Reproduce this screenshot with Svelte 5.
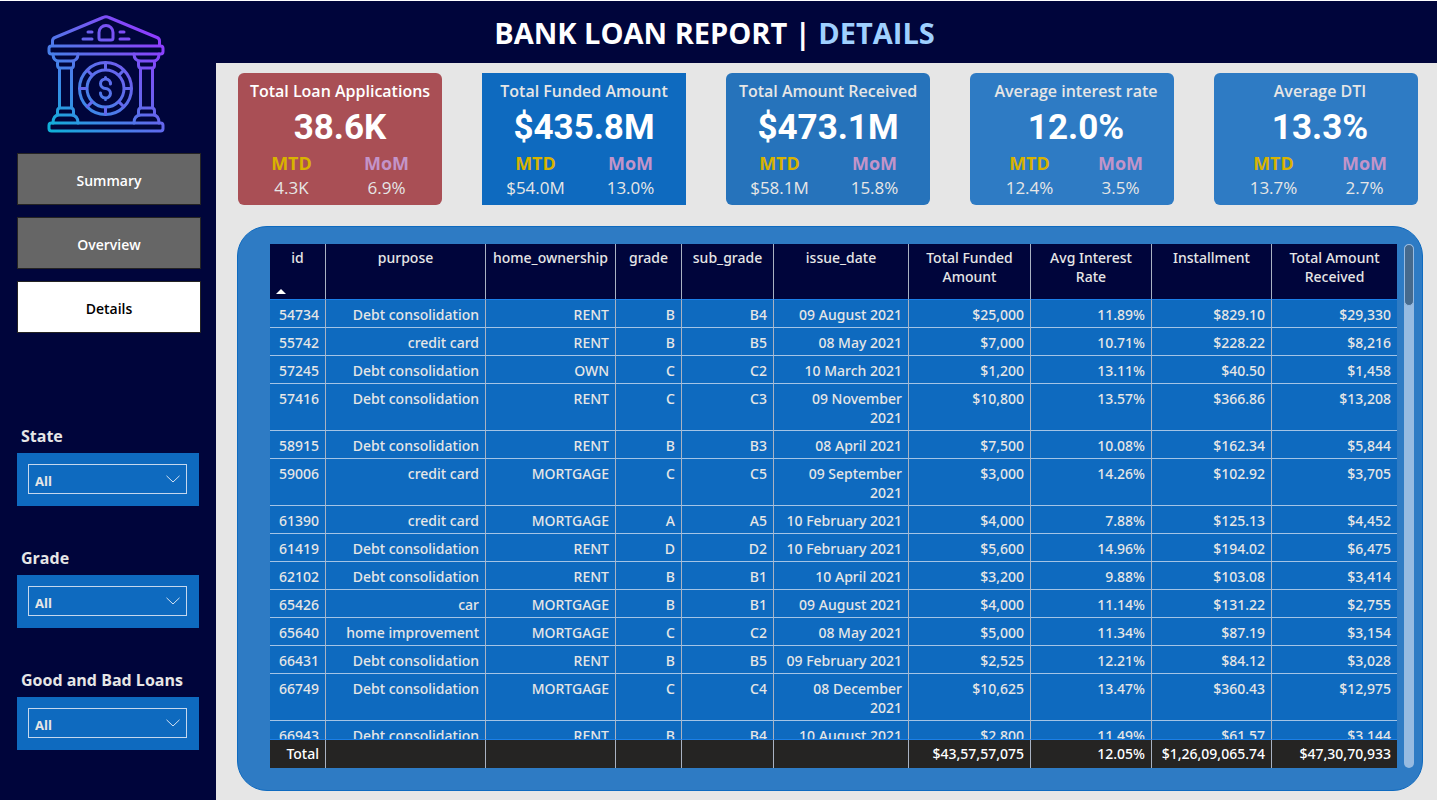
<script>
  const pages = ['Summary', 'Overview', 'Details'];
  const current = 'Details';

  const filters = [
    { id: 'state', label: 'State' },
    { id: 'grade', label: 'Grade' },
    { id: 'quality', label: 'Good and Bad Loans' }
  ];

  const cards = [
    { title: 'Total Loan Applications', value: '38.6K', mtd: '4.3K', mom: '6.9%', tone: 'red' },
    { title: 'Total Funded Amount', value: '$435.8M', mtd: '$54.0M', mom: '13.0%', tone: 'solid' },
    { title: 'Total Amount Received', value: '$473.1M', mtd: '$58.1M', mom: '15.8%', tone: 'mid' },
    { title: 'Average interest rate', value: '12.0%', mtd: '12.4%', mom: '3.5%', tone: 'light' },
    { title: 'Average DTI', value: '13.3%', mtd: '13.7%', mom: '2.7%', tone: 'light' }
  ];

  const columns = [
    { name: 'id', width: 56 },
    { name: 'purpose', width: 160 },
    { name: 'home_ownership', width: 130 },
    { name: 'grade', width: 66 },
    { name: 'sub_grade', width: 92 },
    { name: 'issue_date', width: 135 },
    { name: 'Total Funded Amount', width: 122 },
    { name: 'Avg Interest Rate', width: 121 },
    { name: 'Installment', width: 120 },
    { name: 'Total Amount Received', width: 125 }
  ];
  const total = columns.reduce((sum, c) => sum + c.width, 0);

  const rows = [
    ['54734', 'Debt consolidation', 'RENT', 'B', 'B4', '09 August 2021', '$25,000', '11.89%', '$829.10', '$29,330'],
    ['55742', 'credit card', 'RENT', 'B', 'B5', '08 May 2021', '$7,000', '10.71%', '$228.22', '$8,216'],
    ['57245', 'Debt consolidation', 'OWN', 'C', 'C2', '10 March 2021', '$1,200', '13.11%', '$40.50', '$1,458'],
    ['57416', 'Debt consolidation', 'RENT', 'C', 'C3', '09 November 2021', '$10,800', '13.57%', '$366.86', '$13,208'],
    ['58915', 'Debt consolidation', 'RENT', 'B', 'B3', '08 April 2021', '$7,500', '10.08%', '$162.34', '$5,844'],
    ['59006', 'credit card', 'MORTGAGE', 'C', 'C5', '09 September 2021', '$3,000', '14.26%', '$102.92', '$3,705'],
    ['61390', 'credit card', 'MORTGAGE', 'A', 'A5', '10 February 2021', '$4,000', '7.88%', '$125.13', '$4,452'],
    ['61419', 'Debt consolidation', 'RENT', 'D', 'D2', '10 February 2021', '$5,600', '14.96%', '$194.02', '$6,475'],
    ['62102', 'Debt consolidation', 'RENT', 'B', 'B1', '10 April 2021', '$3,200', '9.88%', '$103.08', '$3,414'],
    ['65426', 'car', 'MORTGAGE', 'B', 'B1', '09 August 2021', '$4,000', '11.14%', '$131.22', '$2,755'],
    ['65640', 'home improvement', 'MORTGAGE', 'C', 'C2', '08 May 2021', '$5,000', '11.34%', '$87.19', '$3,154'],
    ['66431', 'Debt consolidation', 'RENT', 'B', 'B5', '09 February 2021', '$2,525', '12.21%', '$84.12', '$3,028'],
    ['66749', 'Debt consolidation', 'MORTGAGE', 'C', 'C4', '08 December 2021', '$10,625', '13.47%', '$360.43', '$12,975'],
    ['66943', 'Debt consolidation', 'RENT', 'B', 'B4', '10 August 2021', '$2,800', '11.49%', '$61.57', '$3,144']
  ];

  const totals = ['Total', '', '', '', '', '', '$43,57,57,075', '12.05%', '$1,26,09,065.74', '$47,30,70,933'];
  const spokes = [0, 45, 90, 135, 180, 225, 270, 315];
</script>

<div class="page">
  <aside class="sidebar">
    <svg class="logo" viewBox="0 0 118 118" fill="none" stroke="url(#bank)" stroke-width="3" stroke-linejoin="round" stroke-linecap="round" aria-hidden="true">
      <defs>
        <linearGradient id="bank" gradientUnits="userSpaceOnUse" x1="4" y1="114" x2="106" y2="18">
          <stop offset="0" stop-color="#10b0d8" />
          <stop offset="0.3" stop-color="#3f86e8" />
          <stop offset="0.65" stop-color="#6a61ee" />
          <stop offset="1" stop-color="#8f3cff" />
        </linearGradient>
      </defs>
      <path d="M5.500 30V26Q5.500 23.500 8 22.500L56 2.500Q59 1 62 2.500L110 22.500Q112.500 23.500 112.500 26V30" />
      <rect x="2" y="31" width="114" height="8" rx="2.500" />
      <rect x="2" y="108" width="114" height="8" rx="2.500" />
      <path d="M52 23V17.500A7 7 0 0 1 66 17.500V23Q66 25 64 25H54Q52 25 52 23Z" />
      <path d="M41 17H45M36 24H45M73 17H77M73 24H82" />
      <path d="M6 39Q6 46 12 46H24Q31 46 31 39M10.500 46V50Q10.500 53 13 53H24Q26.500 53 26.500 50V46M12.500 53V93M24.500 53V93M10.500 100V96Q10.500 93 13 93H24Q26.500 93 26.500 96V100M6 108Q6 100 12 100H24Q31 100 31 108" />
      <path d="M87 39Q87 46 94 46H106Q112 46 112 39M91.500 46V50Q91.500 53 94 53H105Q107.500 53 107.500 50V46M93.500 53V93M105.500 53V93M91.500 100V96Q91.500 93 94 93H105Q107.500 93 107.500 96V100M87 108Q87 100 94 100H106Q112 100 112 108" />
      <circle cx="58.500" cy="73.500" r="26" />
      <circle cx="58.500" cy="73.500" r="18.500" />
      {#each spokes as angle}
        <path d="M58.500 48V54.500" transform="rotate({angle} 58.500 73.500)" />
      {/each}
      <path d="M63.500 69A5 4.800 0 1 0 58.500 73.500A5 4.800 0 1 1 53.500 78M58.500 62.500V64M58.500 83V84.500" />
    </svg>

    <nav>
      {#each pages as page}
        <button type="button" class:active={page === current}>{page}</button>
      {/each}
    </nav>

    <div class="filters">
      {#each filters as filter}
        <div class="filter">
          <label for={filter.id}>{filter.label}</label>
          <div class="slicer">
            <select id={filter.id}>
              <option>All</option>
            </select>
            <svg viewBox="0 0 14 8" fill="none" stroke="#d5e3f2" aria-hidden="true"><path d="M0.500 0.800L7 7L13.500 0.800" /></svg>
          </div>
        </div>
      {/each}
    </div>
  </aside>

  <header>
    <h1>BANK LOAN REPORT | <span>DETAILS</span></h1>
  </header>

  <main>
    <section class="cards">
      {#each cards as card}
        <article class="card {card.tone}">
          <h2>{card.title}</h2>
          <strong>{card.value}</strong>
          <dl>
            <div><dt class="mtd">MTD</dt><dd>{card.mtd}</dd></div>
            <div><dt class="mom">MoM</dt><dd>{card.mom}</dd></div>
          </dl>
        </article>
      {/each}
    </section>

    <section class="panel">
      <div class="scroller">
        <table>
          <colgroup>
            {#each columns as column}
              <col style="width: {(column.width / total) * 100}%" />
            {/each}
          </colgroup>
          <thead>
            <tr>
              {#each columns as column, i}
                <th scope="col">
                  {column.name}
                  {#if i === 0}<svg class="sort" viewBox="0 0 10 5" aria-hidden="true"><path d="M0 5L5 0L10 5Z" fill="#fff" /></svg>{/if}
                </th>
              {/each}
            </tr>
          </thead>
          <tbody>
            {#each rows as row}
              <tr>
                {#each row as cell}<td>{cell}</td>{/each}
              </tr>
            {/each}
          </tbody>
          <tfoot>
            <tr>
              {#each totals as cell}<td>{cell}</td>{/each}
            </tr>
          </tfoot>
        </table>
      </div>
      <div class="track"><div class="thumb"></div></div>
    </section>
  </main>
</div>

<style>
  :global(body) {
    margin: 0;
  }

  .page {
    box-sizing: border-box;
    display: grid;
    grid-template-columns: 216px minmax(0, 1fr);
    grid-template-rows: 62px minmax(0, 1fr);
    min-height: 100vh;
    border-top: 1px solid #fff;
    background: #e6e6e6;
    color: #e6e6e6;
    font-family: 'Noto Sans', 'Open Sans', sans-serif;
    font-size: 14px;
    font-weight: 500;
    line-height: 19px;
  }

  .sidebar {
    grid-row: 1 / 3;
    background: #00053b;
    padding: 14px 15px 0 17px;
  }

  .logo {
    display: block;
    width: 118px;
    height: 118px;
    margin: 0 0 20px 30px;
  }

  nav {
    display: grid;
    gap: 12px;
  }

  button {
    height: 52px;
    border: 1px solid #252423;
    padding: 3px 0 0;
    background: #666;
    color: #fff;
    font: 600 14px/19px 'Open Sans', 'Noto Sans', sans-serif;
  }

  button.active {
    background: #fff;
    color: #000;
  }

  .filters {
    display: grid;
    gap: 42px;
    margin: 93px 2px 0 0;
  }

  label {
    display: block;
    padding: 0 0 7px 4px;
    color: #e6e6e6;
    font: 700 16px/20px 'Open Sans', 'Noto Sans', sans-serif;
    white-space: nowrap;
  }

  .slicer {
    display: grid;
    align-items: center;
    background: #0e6abf;
    padding: 11px 12px 12px 11px;
  }

  .slicer > * {
    grid-area: 1 / 1;
  }

  .slicer svg {
    width: 14px;
    height: 8px;
    justify-self: end;
    margin-right: 7px;
    pointer-events: none;
  }

  select {
    appearance: none;
    width: 100%;
    height: 30px;
    border: 1px solid #c5d8ee;
    border-radius: 0;
    background: transparent;
    color: #e6e6e6;
    padding: 4px 24px 0 6px;
    font: 700 13px/19px 'Open Sans', 'Noto Sans', sans-serif;
  }

  header {
    background: #00053b;
    padding: 2px 224px 0 0;
    display: grid;
    place-items: center;
  }

  h1 {
    margin: 0;
    color: #fff;
    font: 700 29px/40px 'Open Sans', 'Noto Sans', sans-serif;
    white-space: nowrap;
  }

  h1 span {
    color: #9fd0ff;
  }

  main {
    display: flex;
    flex-direction: column;
    padding: 10px 14px 9px 21px;
    gap: 21px;
  }

  .cards {
    display: grid;
    grid-template-columns: repeat(5, minmax(0, 1fr));
    gap: 40px;
    margin: 0 5px 0 1px;
  }

  .card {
    border-radius: 6px;
    padding: 7px 0 6px;
    text-align: center;
  }

  .red {
    background: #a94f55;
  }

  .solid {
    background: #0e6abf;
    border-radius: 0;
  }

  .mid {
    background: #2673bb;
  }

  .light {
    background: #2e7bc4;
    padding-left: 8px;
  }

  h2 {
    margin: 0;
    font: 600 16px/22px 'Open Sans', 'Noto Sans', sans-serif;
    white-space: nowrap;
  }

  .red h2 {
    color: #fff;
  }

  strong {
    display: block;
    color: #fff;
    font: 700 35px/52px Roboto, sans-serif;
  }

  dl {
    display: grid;
    grid-template-columns: 1fr 1fr;
    margin: 0 8px 0 6px;
  }

  dt {
    font: 700 18px/18px 'Open Sans', 'Noto Sans', sans-serif;
  }

  .mtd {
    color: #d9b300;
  }

  .mom {
    color: #c394c9;
  }

  dd {
    margin: 0;
    padding-top: 5px;
    font: 500 17px/22px 'Open Sans', 'Noto Sans', sans-serif;
  }

  .panel {
    flex: 1 1 0;
    min-height: 300px;
    box-sizing: border-box;
    display: flex;
    gap: 7px;
    background: #2e7bc4;
    border: 1px solid #0e6abf;
    border-radius: 30px;
    padding: 17px 8px 22px 32px;
  }

  .scroller {
    flex: 1;
    height: 0;
    min-height: 100%;
    overflow: auto;
    scrollbar-width: none;
  }

  table {
    width: 100%;
    table-layout: fixed;
    border-collapse: separate;
    border-spacing: 0;
    background: #0e6abf;
  }

  th {
    position: sticky;
    top: 0;
    height: 56px;
    box-sizing: border-box;
    padding: 4px 5px;
    border-bottom: 1px solid #1a7fe8;
    background: #00053b;
    font-weight: 500;
    vertical-align: top;
  }

  td {
    padding: 5px 6px 3px;
    border-bottom: 1px solid #a4c4e6;
    text-align: right;
    vertical-align: top;
  }

  th:not(:last-child),
  td:not(:last-child) {
    border-right: 1px solid #a9b2c2;
  }

  .sort {
    position: absolute;
    left: 6px;
    bottom: 5px;
    width: 10px;
    height: 5px;
  }

  tfoot td {
    position: sticky;
    bottom: 0;
    height: 20px;
    padding: 4px 6px;
    border-top: 1px solid #1a7fe8;
    border-bottom: 0;
    background: #252423;
    color: #fff;
  }

  .track {
    width: 10px;
    border-radius: 5px;
    background: #97bbe1;
  }

  .thumb {
    box-sizing: border-box;
    height: 62px;
    border: 1px solid #97bbe1;
    border-radius: 5px;
    background: #466a8d;
  }
</style>
